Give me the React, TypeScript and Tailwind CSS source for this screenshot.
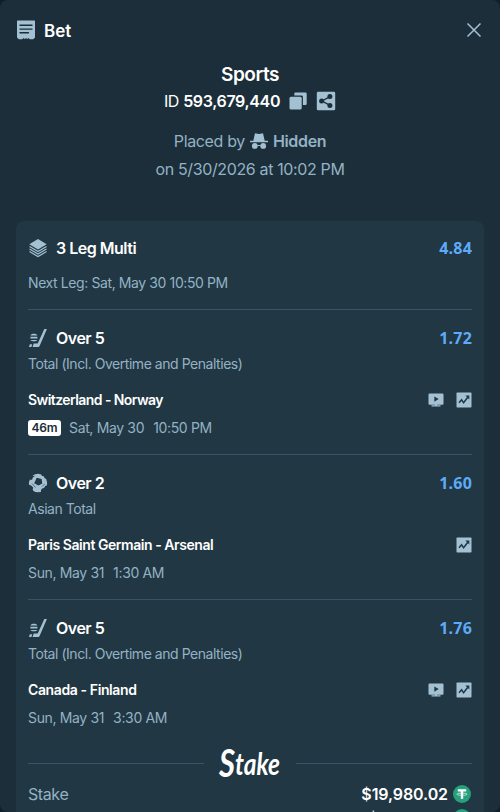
import type { ReactNode } from "react";

type Sport = "hockey" | "soccer";

type Leg = {
  sport: Sport;
  pick: string;
  odds: string;
  market: string;
  match: string;
  matchClass: string;
  badge?: string;
  date: string;
  time: string;
  stream?: boolean;
};

const LEGS: Leg[] = [
  {
    sport: "hockey",
    pick: "Over 5",
    odds: "1.72",
    market: "Total (Incl. Overtime and Penalties)",
    match: "Switzerland - Norway",
    matchClass: "tracking-[-0.57px]",
    badge: "46m",
    date: "Sat, May 30",
    time: "10:50 PM",
    stream: true,
  },
  {
    sport: "soccer",
    pick: "Over 2",
    odds: "1.60",
    market: "Asian Total",
    match: "Paris Saint Germain - Arsenal",
    matchClass: "tracking-[-0.45px]",
    date: "Sun, May 31",
    time: "1:30 AM",
  },
  {
    sport: "hockey",
    pick: "Over 5",
    odds: "1.76",
    market: "Total (Incl. Overtime and Penalties)",
    match: "Canada - Finland",
    matchClass: "tracking-[-0.39px]",
    date: "Sun, May 31",
    time: "3:30 AM",
    stream: true,
  },
];

function BetIcon() {
  return (
    <svg viewBox="0 0 20 20" className="h-5 w-5" fill="#a3c1d3">
      <path d="M1.6.5h16.8a.6.6 0 0 1 .6.6v16.3l-1.8 1.9h-3.4l-1.500-1.200-1.200 1.200-1.100-1.500-1.100 1.500-1.200-1.200-1.500 1.200H2.800L1 17.400V1.100A.6.6 0 0 1 1.600.5Z" />
      <path d="M4 5.300h12M4 9.100h12M4 12.700h8.500" stroke="#1b2e39" strokeWidth="1.400" strokeLinecap="round" />
    </svg>
  );
}

function CopyIcon() {
  return (
    <svg viewBox="0 0 18 18" className="h-[18px] w-[18px]" fill="#a3c1d3">
      <rect x="0.500" y="4.800" width="12.200" height="12.700" rx="1.500" />
      <path d="M6.500.5h10a1.200 1.200 0 0 1 1.200 1.200v10.100a1.200 1.200 0 0 1-1.200 1.200h-2.600V5a1.400 1.400 0 0 0-1.400-1.400H5.300V1.700A1.200 1.200 0 0 1 6.500.5Z" />
    </svg>
  );
}

function ShareIcon() {
  return (
    <svg viewBox="0 0 20 20" className="h-5 w-5">
      <rect x="0.800" y="0.800" width="18.400" height="18.400" rx="1.300" fill="#a3c1d3" />
      <path d="M14 5.600 6 10l8 4.400" stroke="#1b2e39" strokeWidth="1.300" fill="none" />
      <g fill="#1b2e39">
        <circle cx="13.900" cy="5.500" r="2.500" />
        <circle cx="5.600" cy="10" r="2.500" />
        <circle cx="13.900" cy="14.500" r="2.500" />
      </g>
    </svg>
  );
}

function HiddenIcon() {
  return (
    <svg viewBox="0 0 18 16" className="h-4 w-[18px]" fill="#a3c1d3">
      <path d="M5 .3 9 1l4-.7 1.700 7.500H18v1.500H0V7.800h3.300Z" />
      <path d="M7.500 12h3v1h-3z" />
      <circle cx="4.800" cy="12.900" r="2.900" />
      <circle cx="13.200" cy="12.900" r="2.900" />
    </svg>
  );
}

function LayersIcon() {
  return (
    <svg viewBox="0 0 20 20" className="h-5 w-5" fill="#a3c1d3">
      <path d="M10 1 18.700 6.300 10 11.600 1.300 6.300Z" />
      <g fill="none" stroke="#a3c1d3" strokeWidth="1.200">
        <path d="m1.500 8.600 8.500 5 8.500-5" />
        <path d="m1.500 11.100 8.500 5 8.500-5" />
        <path d="m1.500 13.600 8.500 5 8.500-5" />
      </g>
    </svg>
  );
}

function HockeyIcon() {
  return (
    <svg viewBox="0 0 20 20" className="h-5 w-5" fill="#a3c1d3">
      <path d="M16.300 1h2.600l-7.200 16.700c-.3.800-.8 1.300-1.700 1.300H4.600l1.100-3.600 4 .2Z" />
      <path d="M1.900 16.300h2.300L3.400 19H.900Z" />
      <path d="M2.400 7.400c.3-1 1.700-1.600 3.500-1.600s3.200.6 3.500 1.600ZM2.400 8.800h7v1.700h-7ZM2.400 11.900h7c-.5.800-1.800 1.300-3.500 1.300s-3-.5-3.500-1.300Z" />
    </svg>
  );
}

function SoccerIcon() {
  return (
    <svg viewBox="0 0 20 20" className="h-5 w-5">
      <circle cx="10" cy="10" r="9.200" fill="#a3c1d3" />
      <g fill="#213743">
        <path d="m8.700 4.800 4.900 1.300.7 4.300-3.900 2.200-4.200-2.300Z" />
        <path d="M3 1.500 5.200 3l2-.3-2.400 1.900-.8 2.400-1.500-.5L.5 8Z" />
        <path d="m13 .5.800 2.200 2.300.9.500 1.600L19 6l-2-5Z" />
        <path d="m.5 12 2.300.2 2.400 2.400-.5 2.200.5 2L1 17Z" />
        <path d="m19.700 12.500-2.600.5-.8 1.800-2.500 1-.9 1.700.2 2L18 18Z" />
      </g>
      <path d="m4 10.500 3.500 4M14.200 13.500l2.500-2.500" stroke="#213743" strokeWidth="0.600" />
    </svg>
  );
}

function StreamIcon() {
  return (
    <svg viewBox="0 0 16 16" className="h-4 w-4">
      <path d="M1.400 1.500h13.200a.9.900 0 0 1 .9.900v9.400a.9.900 0 0 1-.9.900H9v.6h3.500v1.200h-9v-1.200H7v-.6H1.400a.9.900 0 0 1-.9-.9V2.400a.9.900 0 0 1 .9-.9Z" fill="#a3c1d3" />
      <path d="m6.300 4.500 4.400 2.600-4.400 2.600Z" fill="#213743" />
    </svg>
  );
}

function StatsIcon() {
  return (
    <svg viewBox="0 0 16 16" className="h-4 w-4">
      <rect x="0.500" y="0.500" width="15" height="15" rx="0.800" fill="#a3c1d3" />
      <path d="m3 10.800 2.600-3 2 3L12 5" stroke="#213743" strokeWidth="1.500" fill="none" />
      <path d="M9.300 3.500h4v4Z" fill="#213743" />
    </svg>
  );
}

function TetherIcon() {
  return (
    <svg viewBox="0 0 18 18" className="h-[18px] w-[18px]">
      <circle cx="9" cy="9" r="9" fill="#26a17b" />
      <path d="M4.800 4.300h8.400v2.300h-3v7.200H7.800V6.600h-3Z" fill="#fff" />
      <ellipse cx="9" cy="9.200" rx="5.200" ry="1.100" fill="none" stroke="#fff" strokeWidth="0.600" />
    </svg>
  );
}

function StakeLogo() {
  return (
    <svg viewBox="0 0 92 38" className="h-[38px] w-[92px] overflow-visible" fill="#fff" fontFamily="Lato" fontStyle="italic" fontWeight="700">
      <text x="15" y="32.500" fontSize="38" textLength="61" lengthAdjust="spacingAndGlyphs">
        S
        <tspan fontSize="30" dy="-1.500">
          take
        </tspan>
      </text>
    </svg>
  );
}

function Row({ icon, title, odds }: { icon: ReactNode; title: string; odds: string }) {
  return (
    <div className="flex h-6 items-center">
      {icon}
      <span className="ml-2 text-[16px] font-semibold tracking-[-0.5px] text-white">{title}</span>
      <span className="ml-auto font-['Open_Sans'] text-[16px] leading-6 font-bold tracking-[0.2px] text-[#5dabf8]">{odds}</span>
    </div>
  );
}

function LegItem({ leg }: { leg: Leg }) {
  return (
    <div className="h-[145px] border-t border-[#3a5261] pt-4">
      <Row icon={leg.sport === "hockey" ? <HockeyIcon /> : <SoccerIcon />} title={leg.pick} odds={leg.odds} />
      <p className="mt-1 text-[14px] leading-5 tracking-[-0.46px]">{leg.market}</p>
      <div className="mt-[15px] flex h-5 items-center">
        <span className={`text-[14px] font-semibold text-white ${leg.matchClass}`}>{leg.match}</span>
        <span className="ml-auto flex gap-3 pt-px">
          {leg.stream && <StreamIcon />}
          <StatsIcon />
        </span>
      </div>
      <div className="mt-2 flex h-5 items-center text-[14px] tracking-[-0.35px]">
        {leg.badge && (
          <span className="mt-px mr-2 flex h-4 w-[33px] items-center justify-center rounded-[3px] bg-white text-[12px] font-semibold tracking-[-0.2px] text-[#1b2e39]">
            {leg.badge}
          </span>
        )}
        <span>{leg.date}</span>
        <span className="ml-[9px]">{leg.time}</span>
      </div>
    </div>
  );
}

export default function App() {
  return (
    <div className="h-[812px] overflow-hidden bg-[#0f202b] font-['Inter',sans-serif] text-[#94b2c4]">
      <div className="flex h-full flex-col overflow-hidden rounded-lg bg-[#1b2e39]">
        <header className="flex h-[60px] shrink-0 items-center px-4">
          <BetIcon />
          <h1 className="ml-2 pt-px text-[17px] leading-6 font-semibold text-white">Bet</h1>
          <svg viewBox="0 0 20 20" className="ml-auto h-5 w-5" stroke="#a3c1d3" strokeWidth="1.500">
            <path d="m3.500 3.500 13 13m0-13-13 13" />
          </svg>
        </header>

        <section className="flex shrink-0 flex-col items-center">
          <h2 className="pt-px text-[19px] leading-[27px] font-semibold tracking-[-0.45px] text-white">Sports</h2>
          <div className="flex h-[26px] items-center text-[16px] text-white">
            <span className="tracking-[-0.3px]">ID</span>
            <span className="ml-1 font-semibold tracking-[-0.35px]">593,679,440</span>
            <span className="ml-[9px] flex items-center gap-[9px]">
              <CopyIcon />
              <ShareIcon />
            </span>
          </div>
          <div className="mt-[13px] flex h-7 items-center text-[16px] tracking-[-0.35px]">
            <span>Placed by</span>
            <span className="mr-[5px] ml-[5px]">
              <HiddenIcon />
            </span>
            <span className="font-semibold">Hidden</span>
          </div>
          <p className="text-[16px] leading-7 tracking-[-0.36px]">on 5/30/2026 at 10:02 PM</p>
        </section>

        <main className="mx-4 mt-[38px] h-[640px] shrink-0 rounded-t-lg bg-[#213743] px-3 pt-[15px]">
          <div className="h-[73px]">
            <Row icon={<LayersIcon />} title="3 Leg Multi" odds="4.84" />
            <p className="mt-[13px] text-[14px] leading-5 tracking-[-0.4px]">Next Leg: Sat, May 30 10:50 PM</p>
          </div>

          {LEGS.map((leg) => (
            <LegItem key={leg.match} leg={leg} />
          ))}

          <div className="flex h-[38px] items-center">
            <span className="h-px flex-1 bg-[#3a5261]" />
            <StakeLogo />
            <span className="h-px flex-1 bg-[#3a5261]" />
          </div>

          <div className="flex text-[16px] tracking-[-0.4px]">
            <span className="leading-6">Stake</span>
            <div className="ml-auto flex flex-col font-semibold tracking-[-0.1px] text-white">
              <div className="flex h-6 items-center justify-end">
                $19,980.02
                <span className="ml-[5px] pr-px">
                  <TetherIcon />
                </span>
              </div>
              <div className="flex h-6 items-center justify-end tracking-[-0.6px]">
                $96,771.23
                <span className="ml-[5px] pr-px">
                  <TetherIcon />
                </span>
              </div>
            </div>
          </div>
        </main>
      </div>
    </div>
  );
}
